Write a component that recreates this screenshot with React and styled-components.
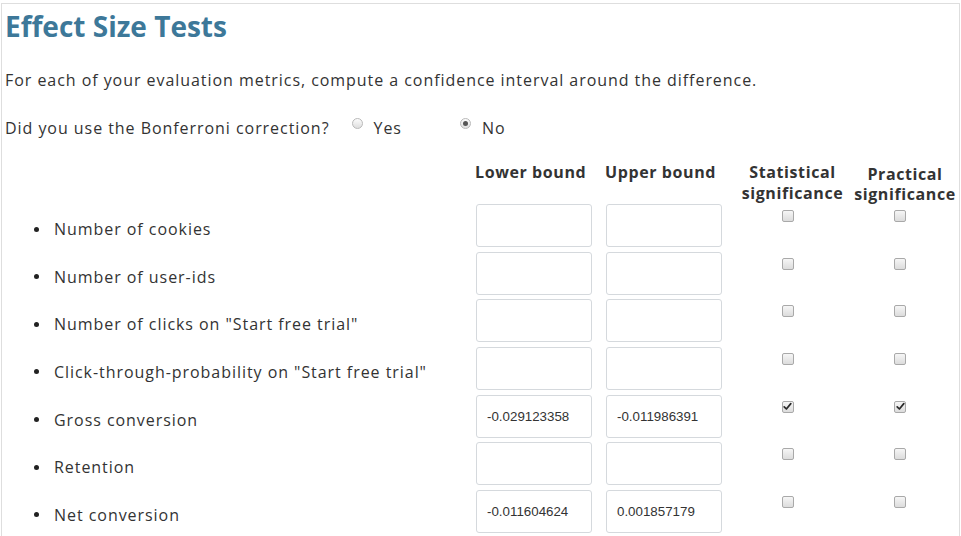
import React from 'react';
import styled, { createGlobalStyle } from 'styled-components';

const Global = createGlobalStyle`
  html, body { margin: 0; padding: 0; background: #fff; overflow: hidden; }
  body { font-family: "Open Sans", "Liberation Sans", sans-serif; color: #333; }
`;

const Panel = styled.div`
  margin: 3px 0 0 1px;
  width: 959px;
  height: 600px;
  box-sizing: border-box;
  border: 1px solid #dedede;
  border-bottom: none;
  padding: 5px 0 0 3px;
`;

const Title = styled.h1`
  margin: 0;
  font-size: 28px;
  line-height: 34px;
  font-weight: 700;
  color: #3d7899;
`;

const Intro = styled.p`
  margin: 25px 0 0;
  font-size: 16px;
  line-height: 24px;
  letter-spacing: 0.95px;
  white-space: nowrap;
`;

const QuestionRow = styled.div`
  margin-top: 24px;
  display: flex;
  align-items: flex-start;
  font-size: 16px;
  line-height: 24px;
  letter-spacing: 0.95px;
`;

const Option = styled.label`
  display: flex;
  align-items: flex-start;
  gap: 11px;
  margin-left: ${(p) => p.$offset}px;
`;

const RadioDot = styled.span`
  width: 11px;
  height: 11px;
  margin-top: 2px;
  box-sizing: border-box;
  border-radius: 50%;
  border: 1px solid #b9b9b9;
  background: linear-gradient(#fcfcfc, #dedede);
  display: flex;
  align-items: center;
  justify-content: center;
  &::after {
    content: "";
    width: 5px;
    height: 5px;
    border-radius: 50%;
    background: ${(p) => (p.$checked ? '#555' : 'transparent')};
  }
`;

const Table = styled.div`
  margin-top: 22px;
  display: grid;
  grid-template-columns: 470px 130px 130px 115px 110px;
  grid-template-rows: 42px repeat(7, 47.67px);
`;

const HeadCell = styled.div`
  font-size: 16px;
  font-weight: 700;
  letter-spacing: 0.6px;
  line-height: ${(p) => p.$lh || 21}px;
  padding-top: ${(p) => p.$pt || 0}px;
  text-align: ${(p) => (p.$center ? 'center' : 'left')};
  white-space: nowrap;
  color: #333;
`;

const LabelCell = styled.div`
  display: flex;
  align-items: center;
  height: 24px;
  margin-top: 13px;
  font-size: 16px;
  line-height: 24px;
  letter-spacing: 0.95px;
  white-space: nowrap;
`;

const Bullet = styled.span`
  width: 5px;
  height: 5px;
  border-radius: 50%;
  background: #222;
  margin: 0 15px 0 29px;
`;

const InputCell = styled.div`
  display: flex;
  align-items: flex-start;
`;

const NumInput = styled.input`
  width: 116px;
  height: 43px;
  box-sizing: border-box;
  border: 1px solid #d5d9dd;
  border-radius: 3px;
  padding: 0 10px;
  margin: 0 0 0 1px;
  font-family: "Liberation Sans", Arial, sans-serif;
  font-size: 13.33px;
  color: #333;
  background: #fff;
  outline: none;
`;

const CheckCell = styled.div`
  display: flex;
  justify-content: center;
  align-items: flex-start;
  padding-top: 6px;
  padding-right: 10px;
`;

const Box = styled.span`
  width: 12px;
  height: 12px;
  box-sizing: border-box;
  border: 1px solid #a9a9a9;
  border-radius: 2px;
  background: linear-gradient(#f6f6f6, #dcdcdc);
  display: flex;
  align-items: center;
  justify-content: center;
`;

const Check = ({ checked }) => (
  <Box>
    {checked && (
      <svg width="9" height="9" viewBox="0 0 9 9">
        <path d="M1.2 4.8 L3.4 7 L7.8 1.6" fill="none" stroke="#2a2a2a" strokeWidth="1.7" strokeLinecap="round" strokeLinejoin="round" />
      </svg>
    )}
  </Box>
);

const rows = [
  { label: 'Number of cookies', lo: '', hi: '', s: false, p: false },
  { label: 'Number of user-ids', lo: '', hi: '', s: false, p: false },
  { label: 'Number of clicks on "Start free trial"', lo: '', hi: '', s: false, p: false },
  { label: 'Click-through-probability on "Start free trial"', lo: '', hi: '', s: false, p: false },
  { label: 'Gross conversion', lo: '-0.029123358', hi: '-0.011986391', s: true, p: true },
  { label: 'Retention', lo: '', hi: '', s: false, p: false },
  { label: 'Net conversion', lo: '-0.011604624', hi: '0.001857179', s: false, p: false },
];

export default function App() {
  return (
    <>
      <Global />
      <Panel>
        <Title>Effect Size Tests</Title>
        <Intro>For each of your evaluation metrics, compute a confidence interval around the difference.</Intro>
        <QuestionRow>
          <span>Did you use the Bonferroni correction?</span>
          <Option $offset={22}>
            <RadioDot />
            <span>Yes</span>
          </Option>
          <Option $offset={58}>
            <RadioDot $checked />
            <span>No</span>
          </Option>
        </QuestionRow>
        <Table>
          <div />
          <HeadCell>Lower bound</HeadCell>
          <HeadCell>Upper bound</HeadCell>
          <HeadCell $center>Statistical<br />significance</HeadCell>
          <HeadCell $center $lh={20} $pt={2}>Practical<br />significance</HeadCell>
          {rows.map((r) => (
            <React.Fragment key={r.label}>
              <LabelCell>
                <Bullet />
                {r.label}
              </LabelCell>
              <InputCell>
                <NumInput defaultValue={r.lo} />
              </InputCell>
              <InputCell>
                <NumInput defaultValue={r.hi} />
              </InputCell>
              <CheckCell>
                <Check checked={r.s} />
              </CheckCell>
              <CheckCell>
                <Check checked={r.p} />
              </CheckCell>
            </React.Fragment>
          ))}
        </Table>
      </Panel>
    </>
  );
}
